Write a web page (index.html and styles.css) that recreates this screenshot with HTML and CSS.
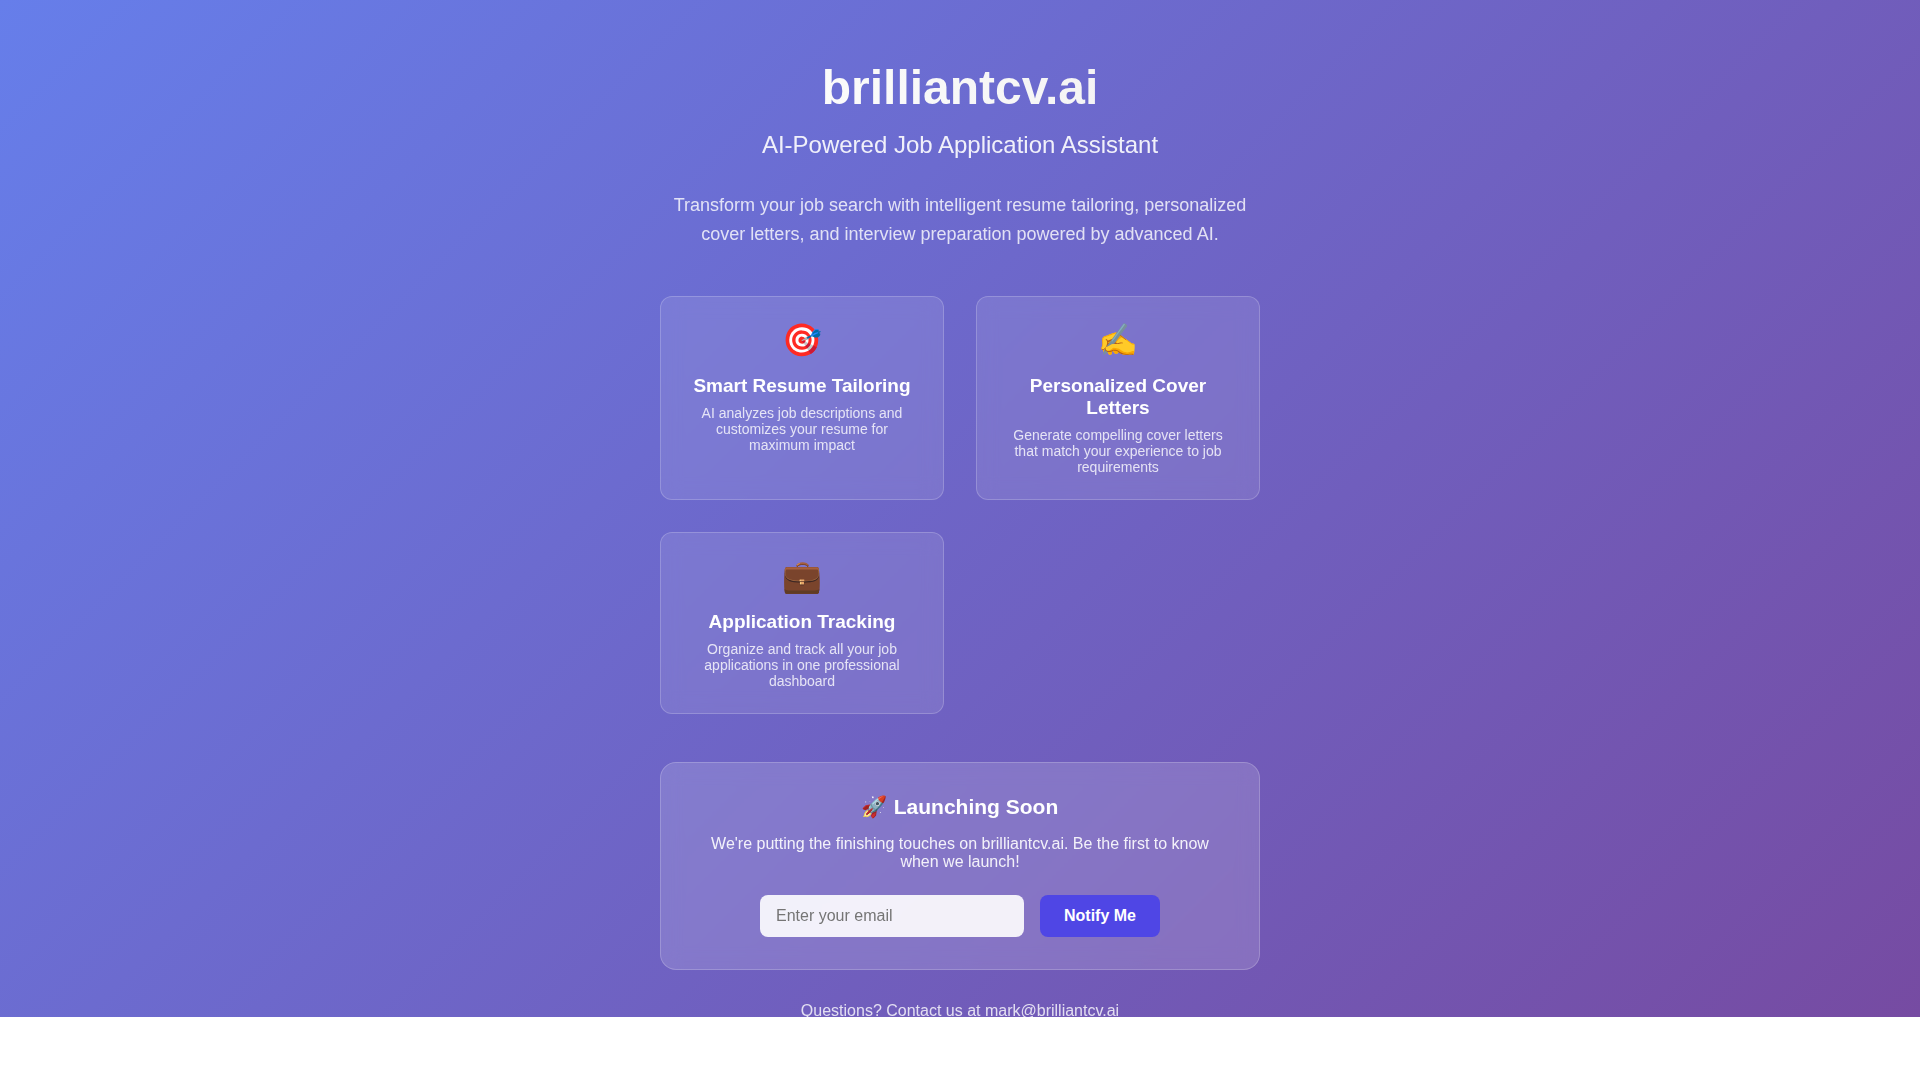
FILE: index.html
```html
<!DOCTYPE html>
<html lang="en">
<head>
  <meta charset="UTF-8">
  <meta name="viewport" content="width=device-width, initial-scale=1">
  <title>brilliantcv.ai</title>
  <link rel="stylesheet" href="styles.css">
</head>
<body>
  <div class="hero">
    <main class="container">
      <h1 class="title">brilliantcv.ai</h1>
      <p class="tagline">AI-Powered Job Application Assistant</p>
      <p class="description">Transform your job search with intelligent resume tailoring, personalized cover letters, and interview preparation powered by advanced AI.</p>

      <section class="features">
        <article class="feature">
          <div class="feature-icon">🎯</div>
          <h2 class="feature-title">Smart Resume Tailoring</h2>
          <p class="feature-text">AI analyzes job descriptions and customizes your resume for maximum impact</p>
        </article>
        <article class="feature">
          <div class="feature-icon">✍️</div>
          <h2 class="feature-title">Personalized Cover Letters</h2>
          <p class="feature-text">Generate compelling cover letters that match your experience to job requirements</p>
        </article>
        <article class="feature">
          <div class="feature-icon">💼</div>
          <h2 class="feature-title">Application Tracking</h2>
          <p class="feature-text">Organize and track all your job applications in one professional dashboard</p>
        </article>
      </section>

      <section class="launch">
        <h2 class="launch-title">🚀 Launching Soon</h2>
        <p class="launch-text">We're putting the finishing touches on brilliantcv.ai. Be the first to know when we launch!</p>
        <form class="signup">
          <input class="email" type="email" placeholder="Enter your email" aria-label="Email address">
          <button class="notify" type="submit">Notify Me</button>
        </form>
      </section>

      <p class="contact">Questions? Contact us at <a class="contact-link" href="mailto:mark@brilliantcv.ai">mark@brilliantcv.ai</a></p>
    </main>
  </div>
</body>
</html>
```
FILE: styles.css
```css
* {
  box-sizing: border-box;
  margin: 0;
  padding: 0;
}

body {
  background: #fff;
  font-family: "Liberation Sans", Arial, "Noto Color Emoji", sans-serif;
  font-size: 16px;
  line-height: 18px;
  color: #fff;
}

.hero {
  display: flow-root;
  padding: 60px 20px 0;
  background: linear-gradient(135deg, #667eea 0%, #764ba2 100%);
  text-align: center;
}

.container {
  max-width: 600px;
  margin: 0 auto;
}

.title {
  margin-bottom: 16px;
  font-size: 48px;
  line-height: 55px;
  background: linear-gradient(45deg, #fff, #f0f0f0);
  background-clip: text;
  -webkit-background-clip: text;
  color: transparent;
}

.tagline {
  margin-bottom: 32px;
  font-size: 24px;
  line-height: 28px;
  opacity: 0.9;
}

.description {
  margin-bottom: 47px;
  font-size: 18px;
  line-height: 29px;
  opacity: 0.8;
}

.features {
  display: grid;
  grid-template-columns: repeat(auto-fit, minmax(200px, 1fr));
  gap: 32px;
  margin-bottom: 48px;
}

.feature {
  padding: 24px;
  border: 1px solid rgba(255, 255, 255, 0.2);
  border-radius: 12px;
  background: rgba(255, 255, 255, 0.1);
  backdrop-filter: blur(10px);
}

.feature-icon {
  margin-bottom: 16px;
  font-size: 32px;
  line-height: 38px;
}

.feature-title {
  margin-bottom: 8px;
  font-size: 19px;
  line-height: 22px;
}

.feature-text {
  font-size: 14px;
  line-height: 16px;
  opacity: 0.8;
}

.launch {
  margin-bottom: 32px;
  padding: 32px;
  border: 1px solid rgba(255, 255, 255, 0.2);
  border-radius: 16px;
  background: rgba(255, 255, 255, 0.15);
  backdrop-filter: blur(10px);
}

.launch-title {
  margin-bottom: 16px;
  font-size: 21px;
  line-height: 24px;
}

.launch-text {
  margin-bottom: 24px;
  opacity: 0.9;
}

.signup {
  display: flex;
  gap: 16px;
  max-width: 400px;
  margin: 0 auto;
}

.email {
  flex: 1;
  min-width: 0;
  padding: 12px 16px;
  border: 0;
  border-radius: 8px;
  background: rgba(255, 255, 255, 0.9);
  font: inherit;
  color: #333;
}

.email::placeholder {
  color: #757575;
}

.notify {
  padding: 12px 24px;
  border: 0;
  border-radius: 8px;
  background: #4f46e5;
  font: inherit;
  font-weight: 700;
  color: #fff;
  cursor: pointer;
}

/* The descenders hang over the lower edge of the gradient. */
.contact {
  margin-bottom: -3px;
  opacity: 0.8;
}

.contact-link {
  color: inherit;
  text-decoration: none;
}
```
